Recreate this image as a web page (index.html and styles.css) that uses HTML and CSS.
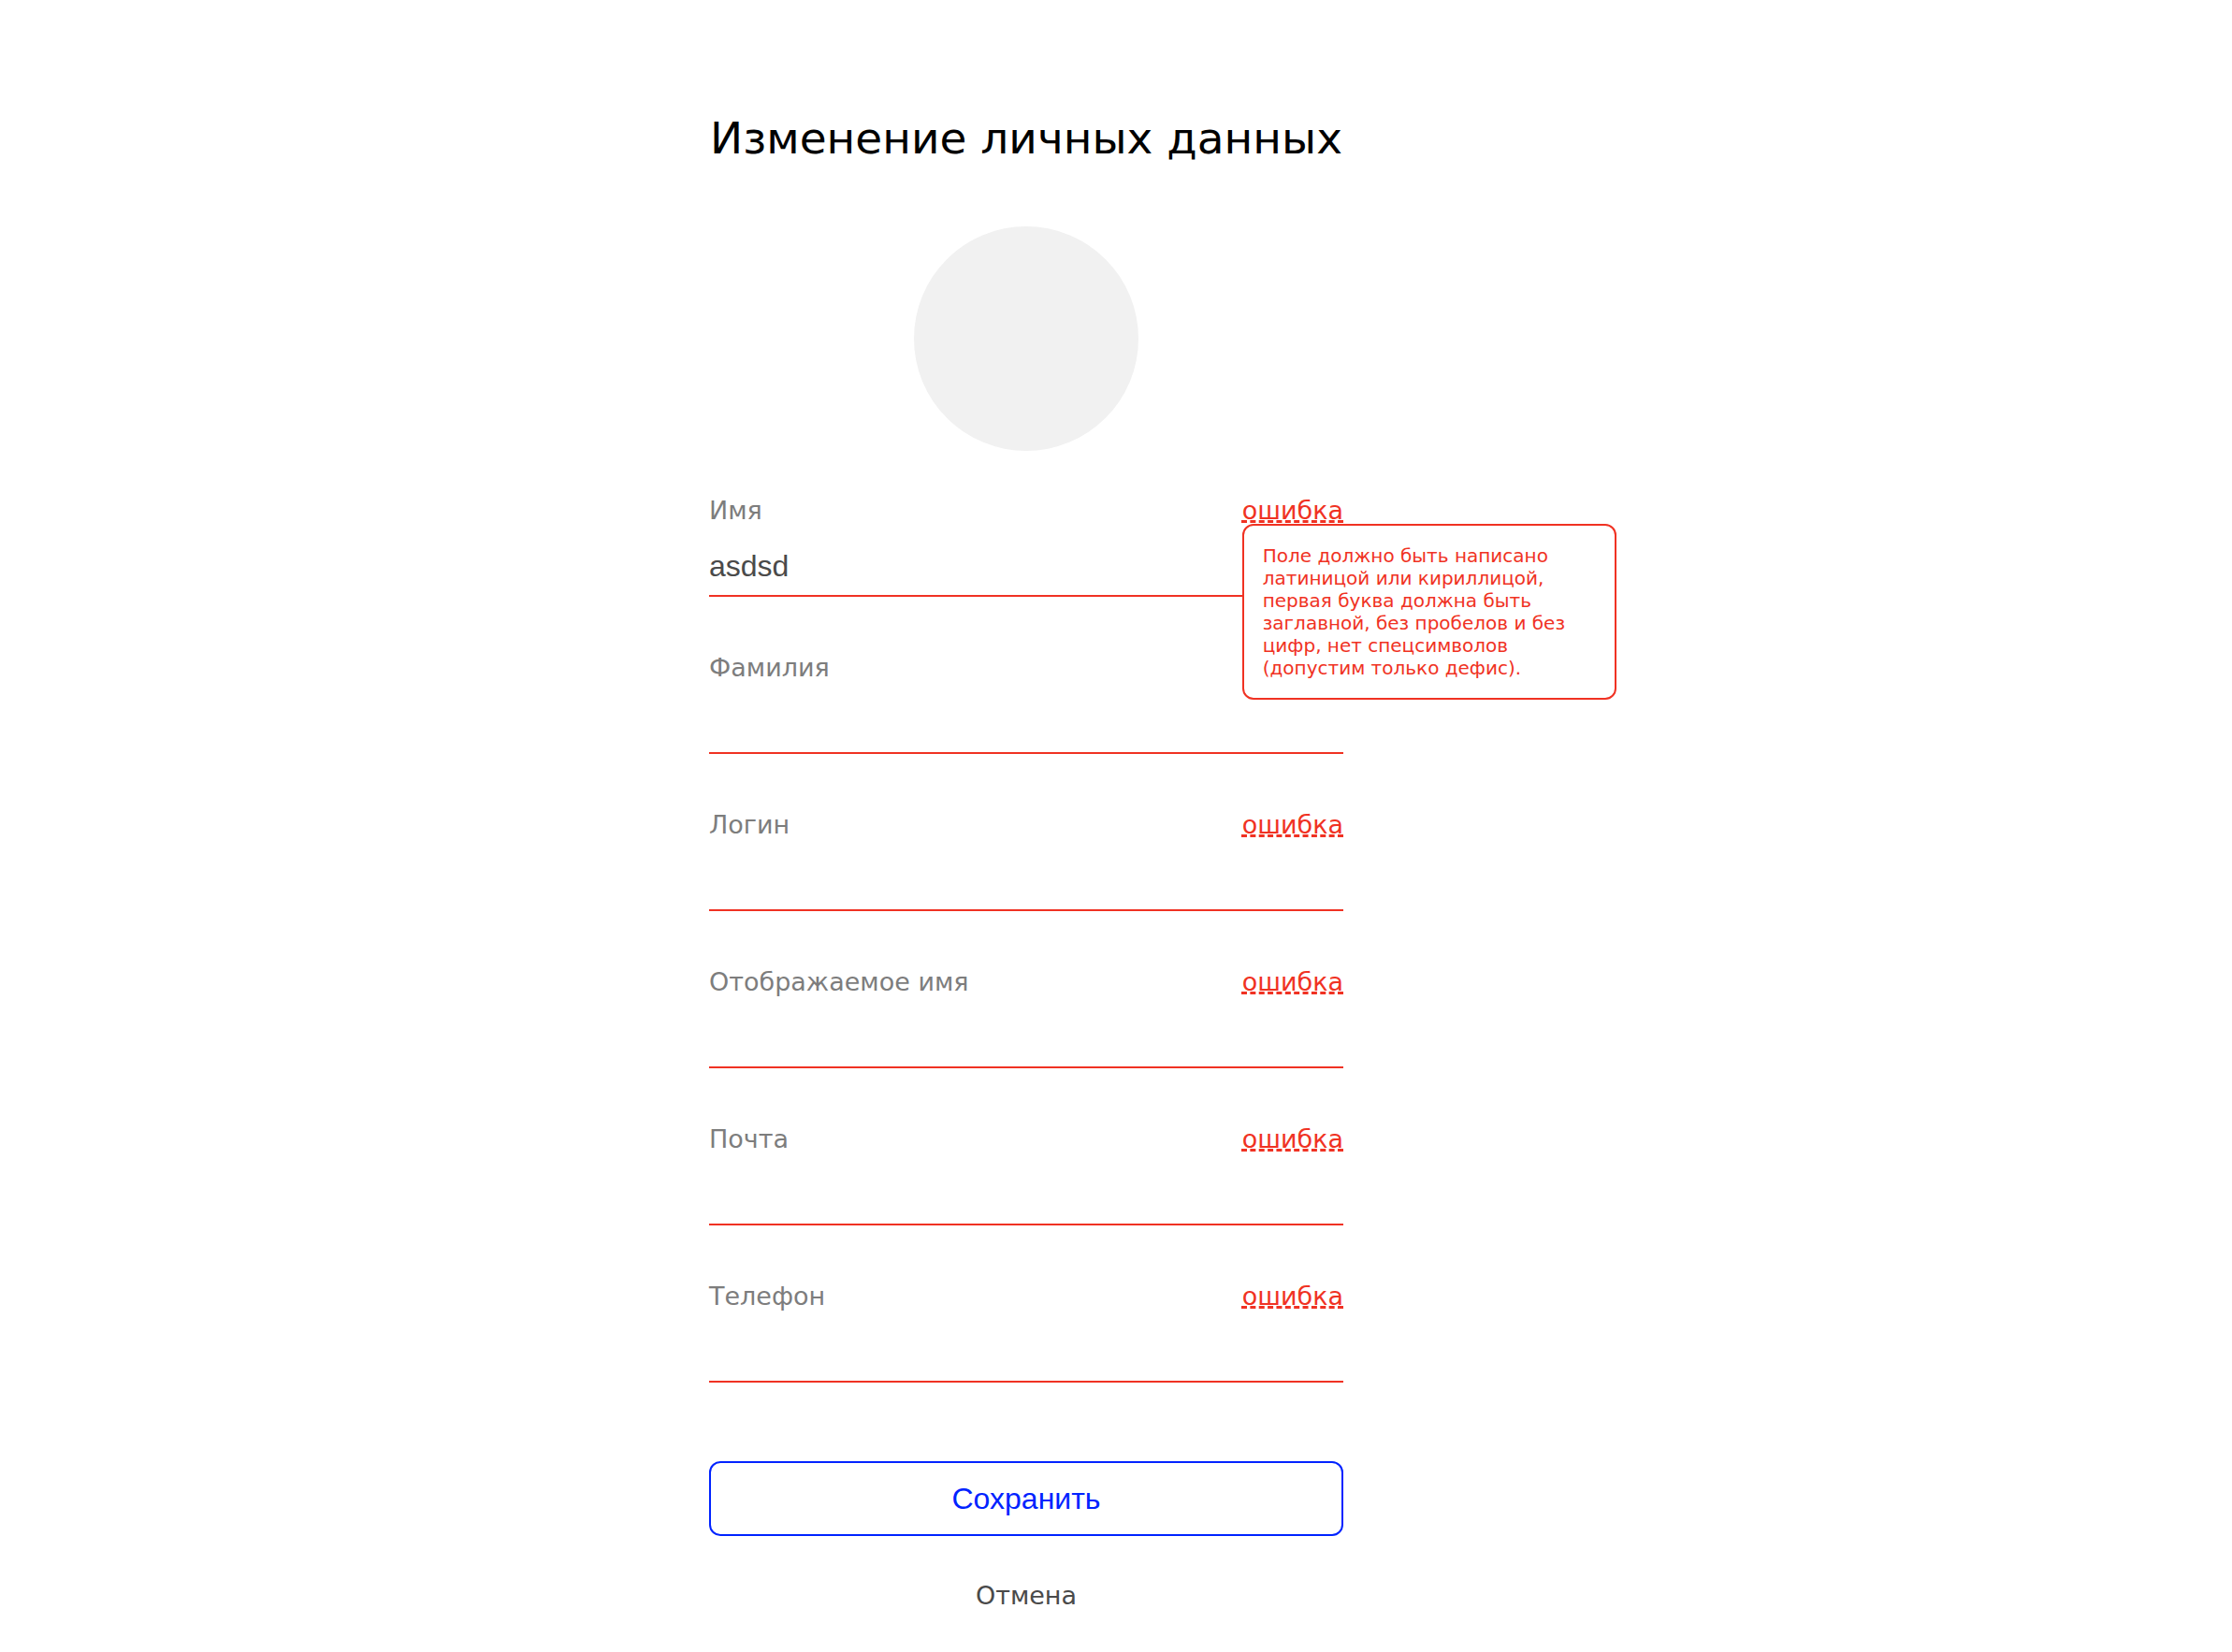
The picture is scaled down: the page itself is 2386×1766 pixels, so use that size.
FILE: index.html
```html
<!DOCTYPE html>
<html lang="ru">
<head>
  <meta charset="utf-8">
  <meta name="viewport" content="width=device-width, initial-scale=1">
  <title>Изменение личных данных</title>
  <link rel="stylesheet" href="styles.css">
</head>
<body>
  <main class="page">
    <form class="profile" novalidate>
      <h1 class="profile__title">Изменение личных данных</h1>
      <div class="profile__avatar"></div>
      <div class="profile__fields">
        <div class="field">
          <div class="field__head">
            <label class="field__label" for="first-name">Имя</label>
            <span class="error">
              <span class="error__text">ошибка</span>
              <span class="error__tooltip" id="first-name-hint" role="tooltip">Поле должно быть написано латиницой или кириллицой, первая буква должна быть заглавной, без пробелов и без цифр, нет спецсимволов (допустим только дефис).</span>
            </span>
          </div>
          <input class="field__input" id="first-name" name="first_name" type="text" value="asdsd" aria-describedby="first-name-hint">
        </div>
        <div class="field">
          <div class="field__head">
            <label class="field__label" for="second-name">Фамилия</label>
          </div>
          <input class="field__input" id="second-name" name="second_name" type="text">
        </div>
        <div class="field">
          <div class="field__head">
            <label class="field__label" for="login">Логин</label>
            <span class="error"><span class="error__text">ошибка</span></span>
          </div>
          <input class="field__input" id="login" name="login" type="text">
        </div>
        <div class="field">
          <div class="field__head">
            <label class="field__label" for="display-name">Отображаемое имя</label>
            <span class="error"><span class="error__text">ошибка</span></span>
          </div>
          <input class="field__input" id="display-name" name="display_name" type="text">
        </div>
        <div class="field">
          <div class="field__head">
            <label class="field__label" for="email">Почта</label>
            <span class="error"><span class="error__text">ошибка</span></span>
          </div>
          <input class="field__input" id="email" name="email" type="email">
        </div>
        <div class="field">
          <div class="field__head">
            <label class="field__label" for="phone">Телефон</label>
            <span class="error"><span class="error__text">ошибка</span></span>
          </div>
          <input class="field__input" id="phone" name="phone" type="tel">
        </div>
      </div>
      <button class="profile__save" type="submit">Сохранить</button>
      <a class="profile__cancel" href="#">Отмена</a>
    </form>
  </main>
</body>
</html>
```
FILE: styles.css
```css
:root {
  --red: #f03223;
  --blue: #0023ff;
  --gray: #7d7d7d;
  --dark: #4a4a4a;
}

*,
*::before,
*::after {
  box-sizing: border-box;
}

body {
  margin: 0;
  background: #fff;
  color: #000;
  font-family: Verdana, "DejaVu Sans", sans-serif;
  font-size: 27px;
  line-height: 28px;
}

.page {
  display: flex;
  justify-content: center;
  padding: 118px 192px 36px 0;
}

.profile {
  display: flex;
  flex-direction: column;
  align-items: center;
  width: 678px;
  max-width: 100%;
}

.profile__title {
  margin: 0 0 64px;
  font-size: 47px;
  font-weight: 400;
  line-height: 60px;
  white-space: nowrap;
}

.profile__avatar {
  width: 240px;
  height: 240px;
  margin-bottom: 50px;
  border-radius: 50%;
  background: #f1f1f1;
}

.profile__fields {
  display: flex;
  flex-direction: column;
  gap: 62px;
  width: 100%;
  margin-bottom: 84px;
}

.field__head {
  display: flex;
  justify-content: space-between;
}

.field__label {
  color: var(--gray);
}

.field__input {
  display: block;
  width: 100%;
  height: 78px;
  padding: 24px 0 10px;
  border: 0;
  border-bottom: 2px solid var(--red);
  border-radius: 0;
  outline: 0;
  background: transparent;
  color: var(--dark);
  font-family: Arial, "Liberation Sans", sans-serif;
  font-size: 32px;
}

.error {
  position: relative;
  color: var(--red);
}

.error__text {
  text-decoration: underline dashed 3px;
  text-decoration-skip-ink: none;
  text-underline-offset: 1px;
}

.error__tooltip {
  position: absolute;
  top: 100%;
  left: 0;
  z-index: 1;
  width: 400px;
  padding: 20px;
  border: 2px solid var(--red);
  border-radius: 12px;
  background: #fff;
  font-size: 20px;
  line-height: 24px;
}

.profile__save {
  width: 100%;
  height: 80px;
  margin-bottom: 50px;
  padding: 0;
  border: 2px solid var(--blue);
  border-radius: 12px;
  background: transparent;
  color: var(--blue);
  font-family: Arial, "Liberation Sans", sans-serif;
  font-size: 32px;
}

.profile__cancel {
  color: var(--dark);
  text-decoration: none;
}
```
